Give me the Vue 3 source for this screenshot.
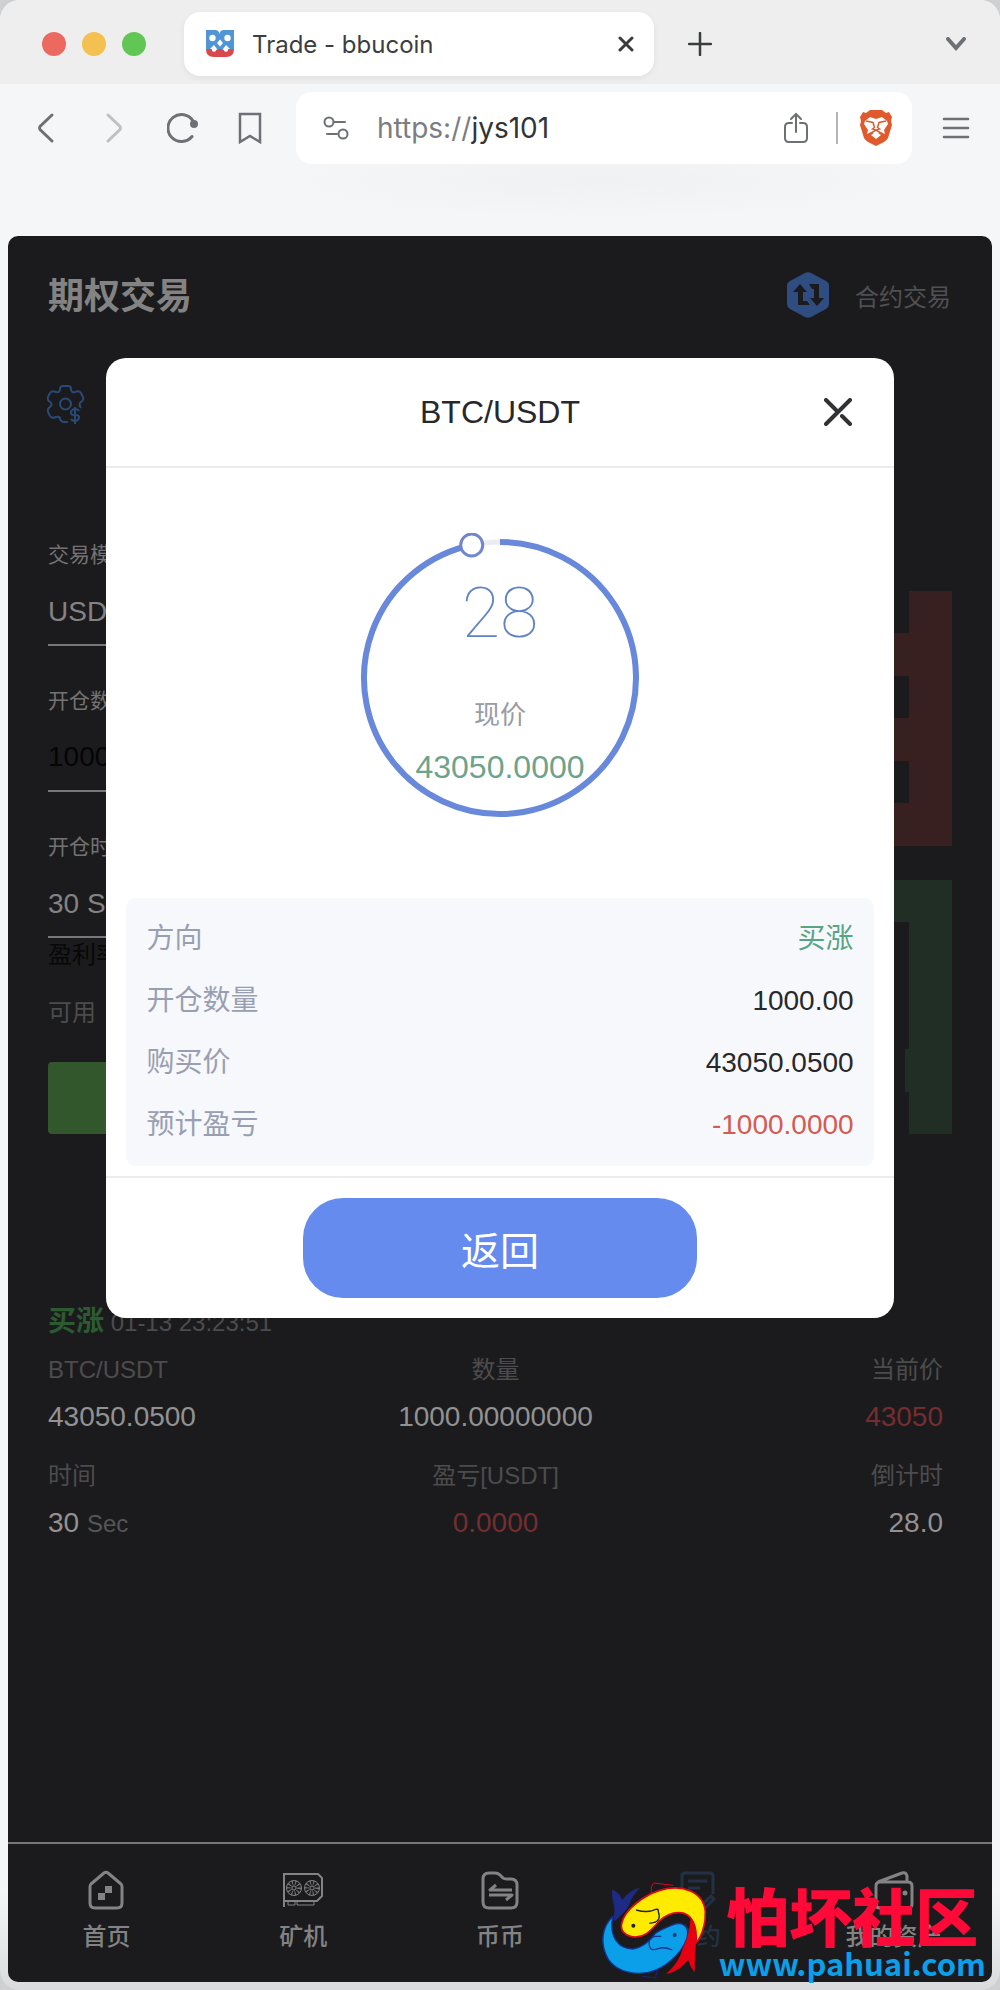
<template>
  <div class="window">
    <header class="tab-strip">
      <div class="lights">
        <span class="light red"></span>
        <span class="light yellow"></span>
        <span class="light green"></span>
      </div>
      <div class="tab">
        <svg class="favicon" viewBox="0 0 28 28">
          <path fill="#5195d6" d="M0 0h9q4 0 4.500 4q.500-4 4.500-4h10v19h-4l-4-4-3 4h-6l-3-4-4 4H0z"/>
          <path fill="#d9484c" d="M0 19h6l2 2 4-2h4l4 2 2-2h6q0 8-8 8H8q-8 0-8-8z"/>
          <circle cx="6.500" cy="8" r="3.200" fill="#fff"/>
          <circle cx="21.500" cy="8" r="3.200" fill="#fff"/>
          <path fill="#fff" d="M14 9.500l3 3.500-3 3.500-3-3.500z"/>
          <circle cx="8" cy="19.500" r="2.200" fill="#fff"/>
          <circle cx="20" cy="19.500" r="2.200" fill="#fff"/>
        </svg>
        <span class="tab-title">Trade - bbucoin</span>
        <button class="icon-btn" aria-label="关闭标签页">
          <svg width="16" height="16" viewBox="0 0 16 16"><path class="stroke dark" d="M2 2l12 12M14 2L2 14"/></svg>
        </button>
      </div>
      <button class="icon-btn add" aria-label="新标签页">
        <svg width="24" height="24" viewBox="0 0 24 24"><path class="stroke dark medium" d="M12 1v22M1 12h22"/></svg>
      </button>
      <button class="icon-btn" aria-label="标签页列表">
        <svg width="20" height="14" viewBox="0 0 20 14"><path class="stroke bold" d="M2 2l8 9 8-9"/></svg>
      </button>
    </header>

    <nav class="toolbar">
      <div class="nav-btns">
        <button class="icon-btn" aria-label="后退">
          <svg width="28" height="32" viewBox="0 0 28 32"><path class="stroke" d="M20 3L8 14.500q-1 1.500 0 3L20 29"/></svg>
        </button>
        <button class="icon-btn faded" aria-label="前进">
          <svg width="28" height="32" viewBox="0 0 28 32"><path class="stroke" d="M9 3l12 11.500q1 1.500 0 3L9 29"/></svg>
        </button>
        <button class="icon-btn" aria-label="刷新">
          <svg width="32" height="32" viewBox="0 0 32 32">
            <path class="stroke" d="M25 24.500A13.500 13.500 0 1 1 26 9"/>
            <circle cx="27" cy="12" r="4" fill="#6d7175"/>
          </svg>
        </button>
        <button class="icon-btn" aria-label="书签">
          <svg width="24" height="32" viewBox="0 0 24 32"><path class="stroke medium" d="M2 2h20v28l-10-6-10 6z"/></svg>
        </button>
      </div>
      <div class="address">
        <svg width="26" height="24" viewBox="0 0 26 24">
          <circle class="stroke thin" cx="6" cy="6" r="4.500"/>
          <path class="stroke thin" d="M11 6h11M4 18h10"/>
          <circle class="stroke thin" cx="20" cy="18" r="4.500"/>
        </svg>
        <span class="url"><i>https://</i>jys101</span>
        <svg width="24" height="32" viewBox="0 0 24 32">
          <path class="stroke thin" d="M8 11H5q-4 0-4 4v11q0 4 4 4h14q4 0 4-4V15q0-4-4-4h-3M12 20V3M7 7l5-5 5 5"/>
        </svg>
        <span class="divider"></span>
        <svg width="32" height="36" viewBox="0 0 32 36">
          <path fill="#e05a2b" d="M10 0h12l4 3 3-1 3 5-1 4 1 4-4 13q-1 2-4 4l-8 4-8-4q-3-2-4-4L0 15l1-4-1-4 3-5 3 1z"/>
          <path fill="#fff" d="M5 11l5-4 6 2 6-2 5 4 1 3-4 6 1 4-4-2-5 3-5-3-4 2 1-4-4-6z"/>
          <path fill="none" stroke="#e05a2b" stroke-width="1.500" d="M6 11l7 1.500 1.500 5-2 1.500 3.500 1 3.500-1-2-1.500 1.500-5L26 11M11 23l5-3 5 3"/>
          <path fill="#fff" d="M11 25l5-3 5 3-5 4z"/>
        </svg>
      </div>
      <button class="icon-btn menu" aria-label="菜单">
        <svg width="28" height="24" viewBox="0 0 28 24"><path class="stroke medium" d="M2 3h24M2 12h24M2 21h24"/></svg>
      </button>
    </nav>

    <main class="page">
      <div class="page-head">
        <h1>期权交易</h1>
        <a class="contract" href="#contract">
          <svg width="42" height="46" viewBox="0 0 42 46">
            <path fill="#2f4d80" d="M18 1q3-1.500 6 0l15 8q3 1.500 3 5v18q0 3-3 5l-15 8q-3 1.500-6 0L3 37q-3-2-3-5V14q0-3.500 3-5z"/>
            <path fill="#1b1b1d" d="M13 12l7 8h-4v9h4l3 4H11V20H6zM22 12h10v14h5l-7 8-7-8h4v-9h-2z"/>
          </svg>
          <span>合约交易</span>
        </a>
      </div>

      <div class="settings">
        <svg width="38" height="40" viewBox="0 0 38 40">
          <path class="gear" d="M34 23q-3-4 0-6 3-2 2-5l-2-4q-2-3-6-1-4 1-4-3 0-3-3-3h-5q-3 0-3 3 0 4-4 3-4-2-6 1l-2 4q-1 3 2 5 3 2 0 5-3 2-2 5l2 4q2 3 6 1 4-1 4 2 1 3 4 3h4"/>
          <circle class="gear" cx="18.500" cy="19" r="5.500"/>
          <path class="gear" d="M32 26q-1-2-4-2t-4 3 4 3 4 3-4 3-4-2M28 22v17"/>
        </svg>
      </div>

      <div class="trade">
        <form @submit.prevent>
          <div class="field">
            <label for="mode">交易模式</label>
            <select id="mode"><option>USDT</option></select>
          </div>
          <div class="field">
            <label for="amount">开仓数量</label>
            <input id="amount" class="black" v-model="amount" type="text">
          </div>
          <div class="field">
            <label for="period">开仓时间</label>
            <select id="period"><option>30 Sec</option></select>
          </div>
          <p class="rate">盈利率</p>
          <p class="avail">可用</p>
          <button class="buy" type="submit">买涨</button>
        </form>
        <div class="book">
          <div class="side sell">
            <span v-for="(w, i) in sells" :key="i" :style="{ width: w + '%' }"></span>
          </div>
          <div class="side buys">
            <span v-for="(w, i) in buys" :key="i" :style="{ width: w + '%' }"></span>
          </div>
        </div>
      </div>

      <section class="order">
        <p class="order-head"><b>买涨</b> 01-13 23:23:51</p>
        <dl>
          <div v-for="item in order" :key="item.label">
            <dt>{{ item.label }}</dt>
            <dd :class="{ loss: item.loss }">{{ item.value }} <small v-if="item.unit">{{ item.unit }}</small></dd>
          </div>
        </dl>
      </section>

      <nav class="tabbar">
        <a href="#home">
          <svg width="40" height="40" viewBox="0 0 40 40">
            <path class="tab-line" d="M5 14L18 3q2-1.500 4 0l13 11q1 1 1 3v16q0 5-5 5H9q-5 0-5-5V17q0-2 1-3z"/>
            <path fill="#838384" d="M19 16h7v7h-7v7h-7v-7h7z"/>
          </svg>
          首页
        </a>
        <a href="#miner">
          <svg width="42" height="40" viewBox="0 0 42 40">
            <path class="tab-line fine" d="M2 4h34l4 4v18l-5 5H2M2 3v34"/>
            <path class="tab-line hair" d="M6 31v4h7v-4M15 32v3h17v-4"/>
            <g v-for="cx in [12, 30]" :key="cx">
              <circle class="tab-line hair" :cx="cx" cy="18" r="7.500"/>
              <circle class="tab-line hair" :cx="cx" cy="18" r="2"/>
              <circle class="blades" :cx="cx" cy="18" r="5"/>
            </g>
          </svg>
          矿机
        </a>
        <a href="#coin">
          <svg width="40" height="40" viewBox="0 0 40 40">
            <path class="tab-line" d="M3 9q0-6 6-6h6q3 0 5 2l3 3q1 1 4 1h4q6 0 6 6v17q0 6-6 6H9q-6 0-6-6z"/>
            <path class="tab-line" d="M32 20H10l6-5M9 25h23l-6 5"/>
          </svg>
          币币
        </a>
        <a href="#contract" class="active">
          <svg width="40" height="40" viewBox="0 0 40 40">
            <path class="tab-line" d="M5 38V6q0-3 3-3h25q3 0 3 3v18M11 11h19M11 18h12M10 37h11M25 35l9-9 3 3-9 9h-3z"/>
          </svg>
          合约
        </a>
        <a href="#assets">
          <svg width="40" height="40" viewBox="0 0 40 40">
            <path class="tab-line" d="M2 16q0-4 4-4h28q4 0 4 4v18q0 4-4 4H6q-4 0-4-4zM4 12L28 3q4-1 5 3v6"/>
            <circle cx="31" cy="23" r="2.500" fill="#838384"/>
          </svg>
          我的资产
        </a>
      </nav>

      <section class="modal" role="dialog" aria-labelledby="modal-title">
        <header class="modal-head">
          <h2 id="modal-title">BTC/USDT</h2>
          <button class="icon-btn close" aria-label="关闭">
            <svg width="28" height="28" viewBox="0 0 28 28"><path d="M2 2l12 12M26 2L2 26M18 18l8 8"/></svg>
          </button>
        </header>
        <div class="modal-body">
          <div class="ring">
            <svg viewBox="0 0 290 290">
              <circle cx="145" cy="145" r="136" fill="none" stroke="#ebecf0" stroke-width="5"/>
              <path :d="arc" fill="none" stroke="#6788db" stroke-width="6"/>
              <circle :cx="knob.x" :cy="knob.y" r="11" fill="#fff" stroke="#7286cd" stroke-width="3"/>
            </svg>
            <div class="ring-text">
              <strong>{{ seconds }}</strong>
              <span>现价</span>
              <em>43050.0000</em>
            </div>
          </div>
          <dl class="info">
            <div v-for="row in rows" :key="row.label">
              <dt>{{ row.label }}</dt>
              <dd :class="row.tone">{{ row.value }}</dd>
            </div>
          </dl>
        </div>
        <footer class="modal-foot">
          <button class="back">返回</button>
        </footer>
      </section>

      <div class="watermark">
        <svg width="112" height="100" viewBox="45 180 336 300">
          <path fill="none" stroke="#e2001a" stroke-width="3" d="M202 223q-2-30 8-34l58 7"/>
          <path fill="none" stroke="#1d2088" stroke-width="3" d="M175 469l40 5 6-34"/>
          <path fill="#1d2b86" d="M88 300q6-25 2-45-8-25-5-47 20 10 30 32 20-30 53-37-25 25-33 52-8 18-32 38-12 14-15 7z"/>
          <path fill="#0a9fe8" stroke="#16338f" stroke-width="4" d="M86 290C55 318 45 370 73 418c25 38 88 54 140 33 48-20 92-66 98-108 2-28-20-38-43-29-20 8-35 14-54 26-14 22-40 44-68 47-42 0-72-36-60-97z"/>
          <path fill="#ffeb00" stroke="#df0716" stroke-width="5" d="M113 311c8-44 70-86 114-100 68-20 132 3 137 64 2 38-12 76-28 94 4-46-8-91-52-91-25 0-44 12-59 26-25 30-48 53-83 46-18-4-34-17-29-39z"/>
          <path fill="#e60012" d="M320 292q18 35 16 75-4 48-4 90-13-15-20-38-25 35-66 43 40-35 51-79 20-38 23-91z"/>
          <path fill="none" stroke="#222" stroke-width="4" d="M156 270q30 8 49 2 20-10 18 3 10 28-15 33l-12 2"/>
          <path fill="none" stroke="#16338f" stroke-width="4" d="M265 390q-25-10-40-5-25 10-28-5-8-25 15-31h20"/>
          <circle cx="148" cy="317" r="6" fill="#222"/>
          <circle cx="272" cy="345" r="6" fill="#173a73"/>
        </svg>
        <div class="brand">
          <strong>怕坏社区</strong>
          <span>www.pahuai.com</span>
        </div>
      </div>
    </main>
  </div>
</template>

<script setup>
import { computed, ref } from 'vue'

const amount = ref('1000')
const seconds = ref(28)

// 深度图每一档的宽度(百分比)
const sells = [10, 70, 10, 60, 10, 80]
const buys = [80, 10, 10, 10, 11, 10]

const order = [
  { label: 'BTC/USDT', value: '43050.0500' },
  { label: '数量', value: '1000.00000000' },
  { label: '当前价', value: '43050', loss: true },
  { label: '时间', value: '30', unit: 'Sec' },
  { label: '盈亏[USDT]', value: '0.0000', loss: true },
  { label: '倒计时', value: '28.0' }
]

const rows = [
  { label: '方向', value: '买涨', tone: 'up' },
  { label: '开仓数量', value: '1000.00' },
  { label: '购买价', value: '43050.0500' },
  { label: '预计盈亏', value: '-1000.0000', tone: 'down' }
]

// 倒计时圆环
const knob = computed(() => {
  const angle = (seconds.value + 1) / 30 * 2 * Math.PI
  return {
    x: 145 + 136 * Math.sin(angle),
    y: 145 - 136 * Math.cos(angle)
  }
})
const arc = computed(() => `M145 9A136 136 0 1 1 ${knob.value.x} ${knob.value.y}`)
</script>

<style>
body {
  margin: 0;
  background: #cfd0d1;
}
</style>

<style scoped>
* {
  box-sizing: border-box;
}

.window {
  min-height: 100vh;
  display: flex;
  flex-direction: column;
  padding-bottom: 8px;
  border-radius: 20px;
  background: linear-gradient(#f5f6f8 95%, #dadbdc);
  font-family: "Liberation Sans", "Noto Sans CJK SC", sans-serif;
  overflow: hidden;
}

h1, h2, p, dl, dd {
  margin: 0;
}

a {
  text-decoration: none;
}

svg {
  flex-shrink: 0;
}

.icon-btn {
  display: flex;
  padding: 0;
  border: 0;
  background: none;
}

.stroke {
  fill: none;
  stroke: #6d7175;
  stroke-width: 3;
  stroke-linecap: round;
}

.stroke.dark {
  stroke: #3b3c3e;
}

.stroke.bold {
  stroke-width: 4;
}

.stroke.medium {
  stroke-width: 2.5;
}

.stroke.thin {
  stroke-width: 2;
}

/* 浏览器标签栏 */
.tab-strip {
  display: flex;
  align-items: center;
  height: 84px;
  padding: 4px 34px 0 42px;
  background: #eeeeee;
}

.lights {
  display: flex;
  gap: 16px;
  margin-right: 38px;
}

.light {
  width: 24px;
  height: 24px;
  border-radius: 50%;
}

.red {
  background: #ec695f;
}

.yellow {
  background: #f4c050;
}

.green {
  background: #62c655;
}

.tab {
  flex: 0 1 470px;
  display: flex;
  align-items: center;
  height: 64px;
  padding: 0 20px 0 22px;
  border-radius: 16px;
  background: #fff;
  box-shadow: 0 2px 6px rgba(0, 0, 0, 0.06);
}

.favicon {
  width: 28px;
  height: 28px;
}

.tab-title {
  flex: 1;
  margin-left: 18px;
  font: 24px Inter, sans-serif;
  color: #3c3d3f;
}

.add {
  margin: 0 auto 0 34px;
}

/* 地址栏 */
.toolbar {
  display: flex;
  align-items: flex-start;
  height: 152px;
  padding-top: 8px;
  background: radial-gradient(ellipse 340px 40px at 60% 64%, #f0f1f3, #f5f6f8);
}

.nav-btns {
  display: flex;
  align-items: center;
  justify-content: space-between;
  width: 230px;
  height: 72px;
  margin: 0 34px 0 32px;
}

.faded {
  opacity: 0.4;
}

.address {
  flex: 1;
  display: flex;
  align-items: center;
  height: 72px;
  padding: 0 20px 0 27px;
  border-radius: 16px;
  background: #fff;
}

.url {
  flex: 1;
  margin-left: 28px;
  font: 28px Inter, sans-serif;
  color: #333436;
}

.url i {
  font-style: normal;
  color: #7b7d80;
}

.divider {
  width: 2px;
  height: 32px;
  margin: 0 22px 0 28px;
  background: #b5b6b8;
}

.menu {
  margin: 24px 30px 0;
}

/* 页面 */
.page {
  flex: 1;
  position: relative;
  display: flex;
  flex-direction: column;
  margin: 0 8px;
  border-radius: 10px;
  background: #1b1b1d;
  color: #838384;
}

.page-head {
  display: flex;
  align-items: center;
  justify-content: space-between;
  height: 118px;
  padding: 0 41px 0 40px;
}

h1 {
  padding-bottom: 4px;
  font-size: 36px;
  font-weight: 700;
}

.contract {
  display: flex;
  align-items: center;
  gap: 26px;
  font-size: 24px;
  color: #505052;
}

.settings {
  height: 100px;
  padding: 31px 39px;
}

.gear {
  fill: none;
  stroke: #294a79;
  stroke-width: 2;
  stroke-linejoin: round;
}

.trade {
  display: grid;
  grid-template-columns: 1fr 1fr;
  gap: 44px;
  margin-top: 46px;
  padding: 0 40px;
}

.field {
  display: flex;
  flex-direction: column;
  height: 146px;
  padding-top: 40px;
}

.field label {
  font-size: 21px;
  line-height: 30px;
  color: #737374;
}

.field input,
.field select {
  width: 100%;
  height: 76px;
  padding: 8px 0 0;
  border: 0;
  border-bottom: 2px solid #777;
  border-radius: 0;
  outline: 0;
  appearance: none;
  background: none;
  font-family: inherit;
  font-size: 28px;
  color: #838384;
}

.field .black {
  color: #050505;
}

.rate,
.avail {
  font-size: 24px;
  line-height: 34px;
}

.rate {
  color: #080808;
}

.avail {
  margin-top: 24px;
  color: #4c4c4d;
}

.buy {
  width: 100%;
  height: 72px;
  margin-top: 32px;
  border: 0;
  border-radius: 4px;
  background: #33572c;
  font: inherit;
  font-size: 28px;
  color: #838384;
}

.book {
  display: flex;
  flex-direction: column;
  gap: 34px;
  padding-top: 91px;
}

.side {
  flex: 1;
  display: flex;
  flex-direction: column;
  align-items: flex-end;
}

.side span {
  flex: 1;
}

.sell span {
  background: #382021;
}

.buys span {
  background: #202e25;
}

/* 订单 */
.order {
  margin-top: 168px;
  padding: 0 49px 0 40px;
}

.order-head {
  font-size: 24px;
  line-height: 40px;
  color: #4c4c4d;
}

.order-head b {
  font-size: 28px;
  font-weight: 700;
  color: #2d5b31;
}

.order dl {
  display: grid;
  grid-template-columns: 1fr 1fr 1fr;
  row-gap: 24px;
  margin-top: 12px;
  text-align: center;
}

.order dl > :nth-child(3n + 1) {
  text-align: left;
}

.order dl > :nth-child(3n) {
  text-align: right;
}

.order dt {
  font-size: 24px;
  line-height: 30px;
  color: #4c4c4d;
}

.order dd {
  margin-top: 12px;
  font-size: 28px;
  line-height: 40px;
  color: #929293;
}

.order .loss {
  color: #742e30;
}

.order small {
  font-size: 24px;
  color: #565657;
}

/* 底部导航 */
.tabbar {
  display: grid;
  grid-template-columns: repeat(5, 1fr);
  height: 140px;
  margin-top: auto;
  border-top: 2px solid #777;
}

.tabbar a {
  display: flex;
  flex-direction: column;
  align-items: center;
  gap: 12px;
  padding-top: 26px;
  font-size: 24px;
  line-height: 30px;
  font-weight: 500;
  color: #838384;
}

.tab-line {
  fill: none;
  stroke: #838384;
  stroke-width: 3;
  stroke-linejoin: round;
}

.tab-line.fine {
  stroke-width: 2;
}

.tab-line.hair {
  stroke-width: 1;
}

.blades {
  fill: none;
  stroke: #777;
  stroke-width: 5;
  stroke-dasharray: 1 2;
}

.tabbar .active {
  color: #223244;
}

.active .tab-line {
  stroke: #223244;
}

/* 弹窗 */
.modal {
  position: absolute;
  top: 122px;
  left: 10%;
  right: 10%;
  border-radius: 20px;
  background: #fff;
}

.modal-head {
  display: grid;
  grid-template-columns: 1fr auto 1fr;
  align-items: center;
  height: 110px;
  padding: 0 42px;
  border-bottom: 2px solid #ebecf0;
}

h2 {
  grid-column: 2;
  font-size: 32px;
  font-weight: 400;
  color: #27282a;
}

.close {
  justify-self: end;
}

.close path {
  fill: none;
  stroke: #303234;
  stroke-width: 4;
  stroke-linecap: round;
}

.modal-body {
  padding: 65px 20px 10px;
}

.ring {
  display: grid;
  justify-content: center;
  margin-bottom: 75px;
}

.ring > * {
  grid-area: 1 / 1;
  width: 290px;
}

.ring svg {
  display: block;
}

.ring-text {
  display: flex;
  flex-direction: column;
  align-items: center;
  padding-top: 40px;
}

.ring-text strong {
  font: 100 70px/80px Roboto, sans-serif;
  color: #6183c6;
}

.ring-text span {
  margin-top: 42px;
  font-size: 26px;
  line-height: 40px;
  color: #999ba6;
}

.ring-text em {
  margin-top: 12px;
  font-size: 32px;
  font-style: normal;
  line-height: 40px;
  color: #6ea38b;
}

.info {
  padding: 10px 20px;
  border-radius: 10px;
  background: #f7f8fb;
}

.info div {
  display: flex;
  justify-content: space-between;
  font-size: 28px;
  line-height: 62px;
}

.info dt {
  color: #999fb2;
}

.info dd {
  color: #27282a;
}

.info .up {
  color: #56a585;
}

.info .down {
  color: #d65a52;
}

.modal-foot {
  padding: 20px 0;
  border-top: 2px solid #ebecee;
}

.back {
  display: block;
  width: 50%;
  height: 100px;
  margin: 0 auto;
  border: 0;
  border-radius: 40px;
  background: #658bee;
  font-family: inherit;
  font-size: 39px;
  color: #fff;
}

/* 水印 */
.watermark {
  position: absolute;
  right: 6px;
  bottom: 2px;
  display: flex;
  align-items: flex-end;
  gap: 8px;
}

.brand {
  display: flex;
  flex-direction: column;
  align-items: center;
  font-family: "Noto Sans CJK SC", sans-serif;
}

.brand strong {
  font-size: 63px;
  font-weight: 900;
  line-height: 64px;
  color: #ff0a38;
}

.brand span {
  font-size: 31px;
  font-weight: 700;
  line-height: 34px;
  color: #0a9fe8;
}
</style>
